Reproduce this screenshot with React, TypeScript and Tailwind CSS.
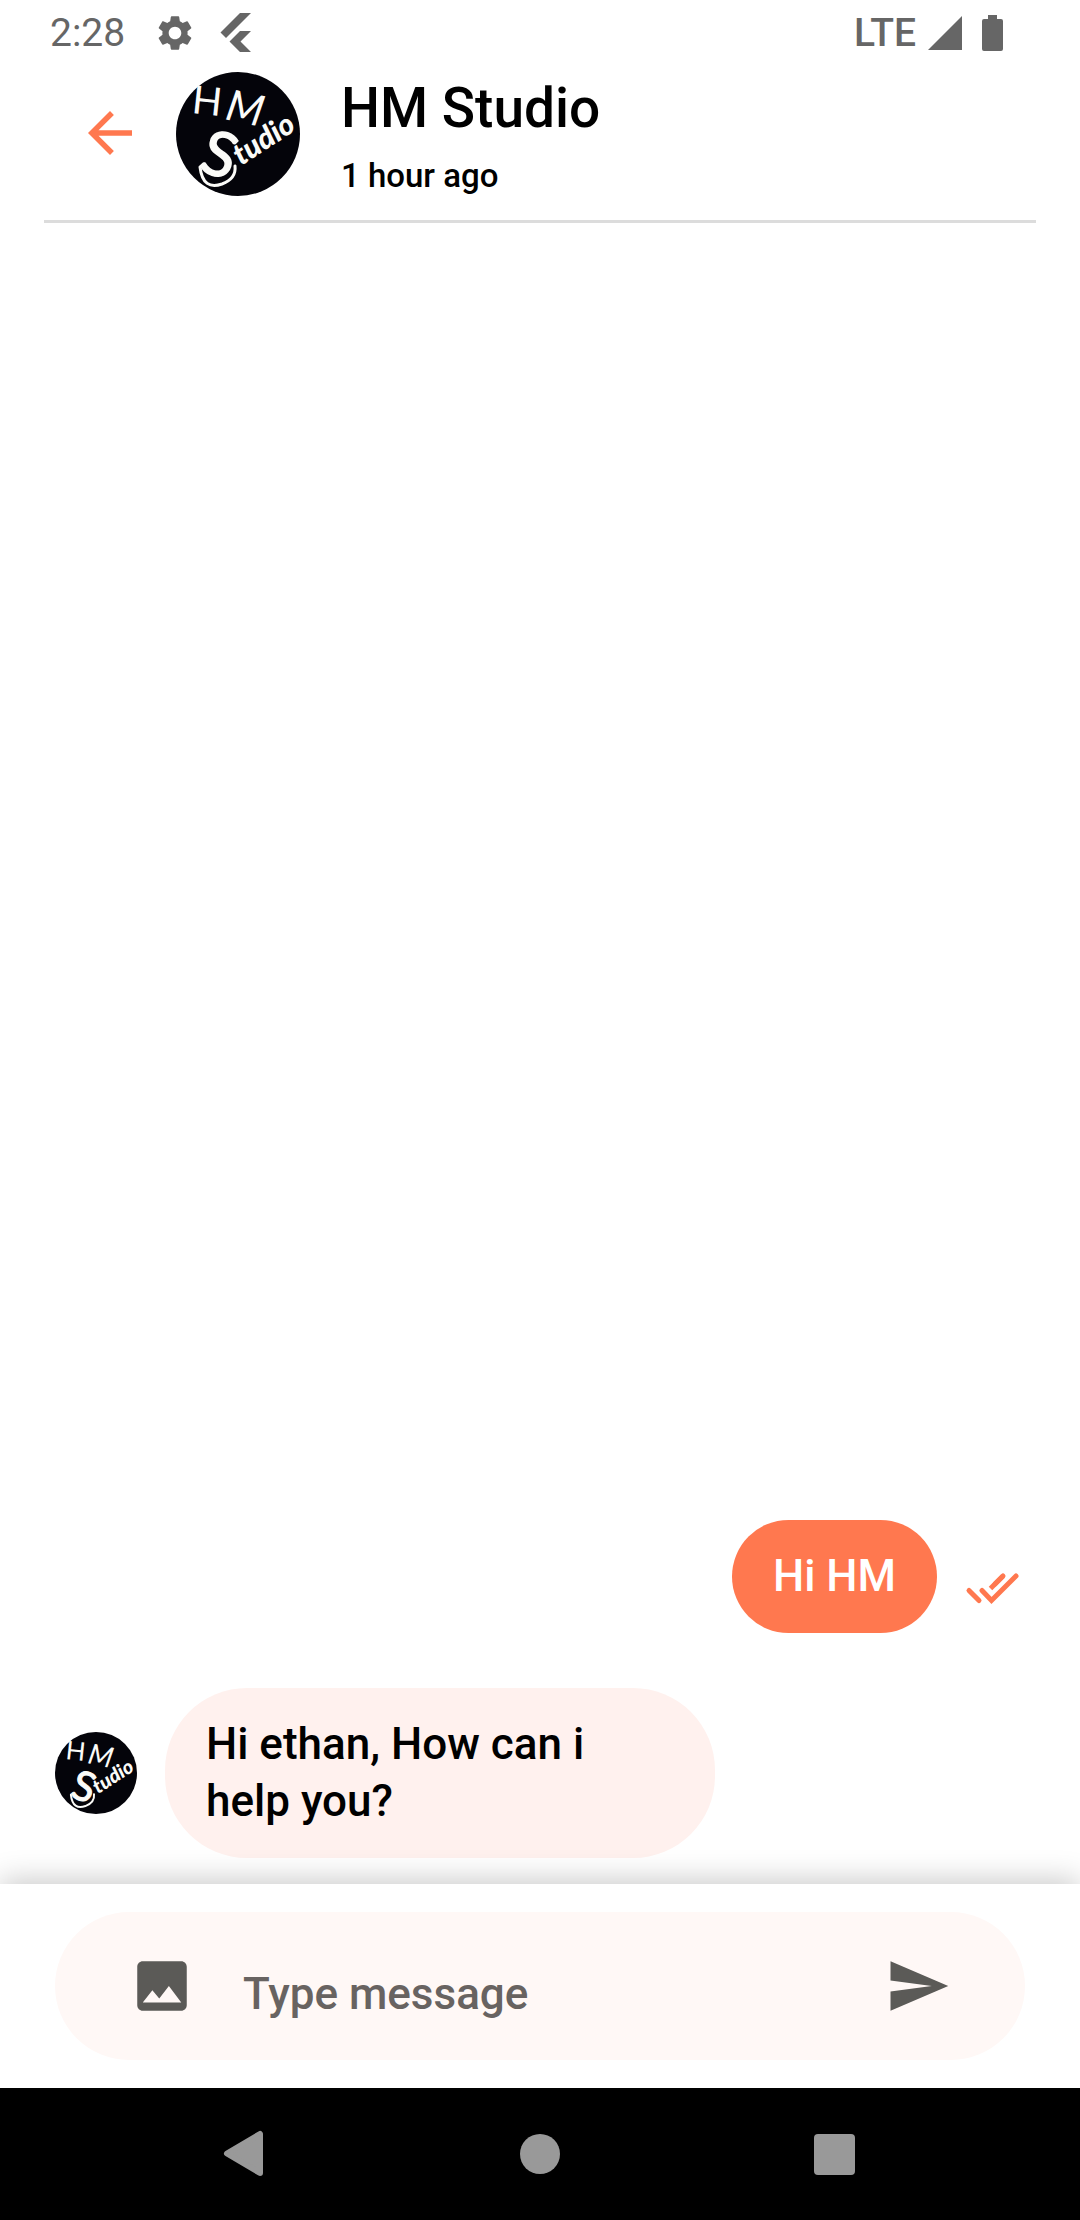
import { MdArrowBack, MdImage, MdSend, MdSettings } from "react-icons/md";

type Message = { id: number; text: string; mine: boolean };

const messages: Message[] = [
  { id: 1, text: "Hi HM", mine: true },
  { id: 2, text: "Hi ethan, How can i help you?", mine: false },
];

function StudioLogo({ className }: { className: string }) {
  return (
    <svg
      viewBox="0 0 124 124"
      role="img"
      aria-label="HM Studio logo"
      className={className}
      fill="#fbfbf8"
      fontFamily="Lato, sans-serif"
    >
      <circle cx="62" cy="62" r="62" fill="#04040a" />
      <text transform="translate(15 41) rotate(6)" fontSize="39" fontWeight="400">
        H
      </text>
      <text transform="translate(48 47) rotate(12)" fontSize="43" fontWeight="400" fontStyle="italic">
        M
      </text>
      <text transform="translate(21 98) rotate(18)" fontSize="62" fontWeight="400" stroke="#fbfbf8" strokeWidth="1.5">
        S
      </text>
      <text transform="translate(65 94) rotate(-33)" fontSize="30" fontWeight="900" fontStyle="italic">
        tudio
      </text>
      <path
        d="M24 95 C26 112 34 116 46 112 C54 109 60 103 59 94"
        fill="none"
        stroke="#fbfbf8"
        strokeWidth="3"
        strokeLinecap="round"
      />
    </svg>
  );
}

function StatusBar() {
  return (
    <div className="flex h-[66px] items-center justify-between pr-[77px] pl-[50px] text-[39px] leading-none text-[#666666]">
      <div className="flex items-center">
        <span>2:28</span>
        <MdSettings className="ml-[29px] size-[42px]" />
        <svg viewBox="0 0 32 40" className="ml-6 h-10 w-8" fill="currentColor" aria-hidden="true">
          <path d="M20 0H31L6 25L0.5 19.5Z" />
          <path d="M20 18H31L20.5 28.5L31 39H20L9.5 28.5Z" />
        </svg>
      </div>
      <div className="flex items-center">
        <span className="font-medium">LTE</span>
        <svg viewBox="0 0 34 34" className="ml-3 size-[34px]" fill="currentColor" aria-hidden="true">
          <path d="M34 0V34H0Z" />
        </svg>
        <svg viewBox="0 0 21 36" className="ml-5 h-9 w-[21px]" fill="currentColor" aria-hidden="true">
          <path d="M6 0H15V4H19Q21 4 21 6V34Q21 36 19 36H2Q0 36 0 34V6Q0 4 2 4H6Z" />
        </svg>
      </div>
    </div>
  );
}

function ChatHeader() {
  return (
    <header className="mx-11 flex h-[157px] items-start border-b-3 border-[#dcdcdc] pt-1.5">
      <button type="button" aria-label="Back" className="mt-7 ml-[33px] text-[#ff784f]">
        <MdArrowBack className="size-[66px]" />
      </button>
      <StudioLogo className="ml-[33px] size-[124px] shrink-0" />
      <div className="ml-[41px] flex flex-col text-black">
        <h1 className="text-[55px] leading-[72px] font-medium">HM Studio</h1>
        <p className="mt-2.5 text-[33px] leading-[44px] font-medium">1 hour ago</p>
      </div>
    </header>
  );
}

function ReadTicks() {
  return (
    <svg
      viewBox="0 0 55 55"
      role="img"
      aria-label="Read"
      className="mb-[17px] size-[55px] shrink-0"
      fill="none"
      stroke="#ff784f"
      strokeWidth="5"
      strokeLinecap="round"
    >
      <path d="M4 29.5L14 39.5" />
      <path d="M17 29.5L26.5 39.5L51 15" />
      <path d="M38 15L25.5 27.5" strokeLinecap="butt" />
      <path d="M38 15L30 23" />
    </svg>
  );
}

function MessageRow({ message }: { message: Message }) {
  if (message.mine) {
    return (
      <li className="flex items-end justify-end gap-7 pr-[60px]">
        <p className="rounded-full bg-[#ff784f] px-[41px] py-7 text-white">{message.text}</p>
        <ReadTicks />
      </li>
    );
  }
  return (
    <li className="flex items-center gap-7 pl-[55px]">
      <StudioLogo className="size-[82px] shrink-0" />
      <p className="max-w-[550px] rounded-[82px] bg-[#fff1ee] px-[41px] py-7 text-black">{message.text}</p>
    </li>
  );
}

function Composer() {
  return (
    <form
      className="bg-white px-[55px] py-7 shadow-[0_-4px_28px_rgba(0,0,0,0.21)]"
      onSubmit={(event) => event.preventDefault()}
    >
      <div className="flex h-[148px] items-center rounded-full bg-[#fff8f6] pr-[74px] pl-[74px] text-[#5b5a57]">
        <button type="button" aria-label="Attach image">
          <MdImage className="size-[66px]" />
        </button>
        <input
          type="text"
          aria-label="Message"
          placeholder="Type message"
          className="ml-12 min-w-0 flex-1 bg-transparent pt-4 text-[44px] leading-[57px] font-medium text-black outline-none placeholder:text-[#686361]"
        />
        <button type="submit" aria-label="Send">
          <MdSend className="size-[66px]" />
        </button>
      </div>
    </form>
  );
}

function SystemNav() {
  return (
    <nav aria-label="System" className="grid h-[132px] grid-cols-3 place-items-center bg-black px-[99px] text-[#999999]">
      <button type="button" aria-label="Back">
        <svg viewBox="0 0 48 48" className="size-12" fill="currentColor" stroke="currentColor" strokeWidth="6" strokeLinejoin="round">
          <path d="M38 4V43L5 23.5Z" />
        </svg>
      </button>
      <button type="button" aria-label="Home" className="size-10 rounded-full bg-[#999999]" />
      <button type="button" aria-label="Recent apps" className="size-[41px] rounded-sm bg-[#999999]" />
    </nav>
  );
}

export default function App() {
  return (
    <div className="flex min-h-screen flex-col bg-white font-[Roboto,sans-serif]">
      <StatusBar />
      <ChatHeader />
      <main className="flex flex-1 flex-col justify-end pb-[26px]">
        <ul className="flex flex-col gap-[55px] text-[44px] leading-[57px] font-medium">
          {messages.map((message) => (
            <MessageRow key={message.id} message={message} />
          ))}
        </ul>
      </main>
      <Composer />
      <SystemNav />
    </div>
  );
}
